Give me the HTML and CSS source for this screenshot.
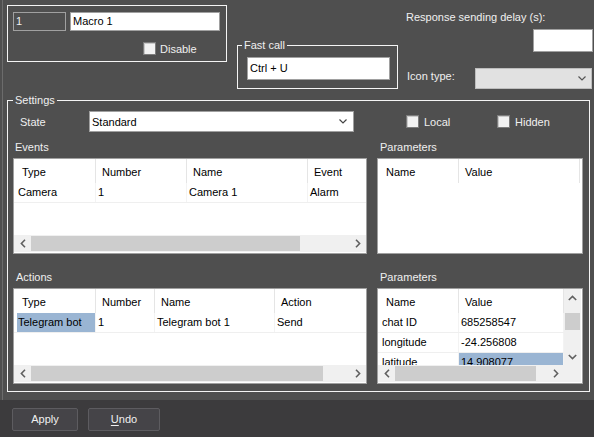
FILE: index.html
```html
<!DOCTYPE html>
<html>
<head>
<meta charset="utf-8">
<title>Macro</title>
<link rel="stylesheet" href="styles.css">
</head>
<body>
<div class="main">
  <div class="top">
    <div class="group1">
      <div class="row-inputs">
        <div class="inp inp-dark id-inp">1</div>
        <div class="inp name-inp">Macro 1</div>
      </div>
      <div class="chk chk-disable"><span class="box"></span><span>Disable</span></div>
    </div>
    <fieldset class="fast">
      <legend>Fast call</legend>
      <div class="inp fast-inp">Ctrl + U</div>
    </fieldset>
    <div class="rightp">
      <div class="rs-label">Response sending delay (s):</div>
      <div class="inp delay"></div>
      <div class="icon-row">
        <span class="icon-label">Icon type:</span>
        <div class="combo combo-dis"><span></span><svg class="chev" width="8" height="5" viewBox="0 0 8 5"><polyline points="0.5,0.5 4,4 7.5,0.5" fill="none" stroke="#555" stroke-width="1.2"/></svg></div>
      </div>
    </div>
  </div>

  <fieldset class="settings">
    <legend>Settings</legend>
    <div class="settings-body">
      <div class="state-row">
        <span class="state-label">State</span>
        <div class="combo combo-state"><span>Standard</span><svg class="chev" width="8" height="5" viewBox="0 0 8 5"><polyline points="0.5,0.5 4,4 7.5,0.5" fill="none" stroke="#444" stroke-width="1.2"/></svg></div>
        <div class="chk chk-local"><span class="box"></span><span>Local</span></div>
        <div class="chk"><span class="box"></span><span>Hidden</span></div>
      </div>

      <div class="pair labels labels-1"><div class="lbl-l">Events</div><div class="lbl-r">Parameters</div></div>
      <div class="pair tables">
        <div class="tbl">
          <div class="thead cols-ev">
            <div class="th">Type</div><div class="th">Number</div><div class="th">Name</div><div class="th">Event</div>
          </div>
          <div class="tbody">
            <div class="tr cols-ev"><div class="td">Camera</div><div class="td">1</div><div class="td">Camera 1</div><div class="td">Alarm</div></div>
          </div>
          <div class="hscroll">
            <span class="arr"><svg width="6" height="9" viewBox="0 0 6 9"><polyline points="5,0.8 1.4,4.5 5,8.2" fill="none" stroke="#606060" stroke-width="1.6"/></svg></span>
            <span class="track"><span class="thumb" style="width:269px"></span></span>
            <span class="arr"><svg width="6" height="9" viewBox="0 0 6 9"><polyline points="1,0.8 4.6,4.5 1,8.2" fill="none" stroke="#606060" stroke-width="1.6"/></svg></span>
          </div>
        </div>
        <div class="tbl">
          <div class="thead cols-p1">
            <div class="th">Name</div><div class="th">Value</div><div class="th"></div>
          </div>
          <div class="tbody"></div>
        </div>
      </div>

      <div class="pair labels labels-2"><div class="lbl-l2">Actions</div><div class="lbl-r">Parameters</div></div>
      <div class="pair tables">
        <div class="tbl">
          <div class="thead cols-ac">
            <div class="th">Type</div><div class="th">Number</div><div class="th">Name</div><div class="th">Action</div>
          </div>
          <div class="tbody">
            <div class="tr cols-ac"><div class="td sel">Telegram bot</div><div class="td">1</div><div class="td">Telegram bot 1</div><div class="td">Send</div></div>
          </div>
          <div class="hscroll">
            <span class="arr"><svg width="6" height="9" viewBox="0 0 6 9"><polyline points="5,0.8 1.4,4.5 5,8.2" fill="none" stroke="#606060" stroke-width="1.6"/></svg></span>
            <span class="track"><span class="thumb" style="width:292px"></span></span>
            <span class="arr"><svg width="6" height="9" viewBox="0 0 6 9"><polyline points="1,0.8 4.6,4.5 1,8.2" fill="none" stroke="#606060" stroke-width="1.6"/></svg></span>
          </div>
        </div>
        <div class="tbl tbl-p2">
          <div class="p2-main">
            <div class="thead cols-p2">
              <div class="th">Name</div><div class="th">Value</div>
            </div>
            <div class="tbody">
              <div class="tr cols-p2"><div class="td">chat ID</div><div class="td">685258547</div></div>
              <div class="tr cols-p2"><div class="td">longitude</div><div class="td">-24.256808</div></div>
              <div class="tr cols-p2"><div class="td">latitude</div><div class="td sel">14.908077</div></div>
            </div>
            <div class="hscroll">
              <span class="arr"><svg width="6" height="9" viewBox="0 0 6 9"><polyline points="5,0.8 1.4,4.5 5,8.2" fill="none" stroke="#606060" stroke-width="1.6"/></svg></span>
              <span class="track"><span class="thumb" style="width:141px"></span></span>
              <span class="arr"><svg width="6" height="9" viewBox="0 0 6 9"><polyline points="1,0.8 4.6,4.5 1,8.2" fill="none" stroke="#606060" stroke-width="1.6"/></svg></span>
            </div>
          </div>
          <div class="vscroll">
            <span class="varr"><svg width="9" height="6" viewBox="0 0 9 6"><polyline points="0.8,5 4.5,1.4 8.2,5" fill="none" stroke="#606060" stroke-width="1.6"/></svg></span>
            <span class="vtrack"><span class="vthumb"></span></span>
            <span class="varr"><svg width="9" height="6" viewBox="0 0 9 6"><polyline points="0.8,1 4.5,4.6 8.2,1" fill="none" stroke="#606060" stroke-width="1.6"/></svg></span>
            <span class="corner"></span>
          </div>
        </div>
      </div>
    </div>
  </fieldset>
</div>
<div class="bottom">
  <button class="btn btn-apply">Apply</button>
  <button class="btn btn-undo"><u>U</u>ndo</button>
</div>
</body>
</html>
```
FILE: styles.css
```css
* { box-sizing: border-box; }
html, body { margin: 0; padding: 0; }
body {
  width: 594px;
  height: 437px;
  overflow: hidden;
  background: #4f4f4f;
  font-family: "Liberation Sans", Arial, sans-serif;
  font-size: 11px;
  line-height: 14px;
  color: #f0f0f0;
}
.main {
  height: 400px;
  margin-left: 2px;
  border-left: 1px solid #6c6c6c;
  padding-left: 4px;
}
.top {
  display: flex;
  align-items: flex-start;
  height: 89px;
}
.group1 {
  margin-top: 5px;
  width: 220px;
  height: 57px;
  border: 1px solid #f4f4f4;
  padding: 6px 0 0 5px;
}
.row-inputs { display: flex; gap: 4px; }
.inp {
  height: 19px;
  border: 1px solid #a0a0a0;
  background: #fff;
  color: #000;
  padding-left: 2px;
  line-height: 17px;
}
.inp-dark { background: #4f4f4f; color: #f0f0f0; }
.id-inp { width: 53px; }
.name-inp { width: 150px; }

.chk { display: flex; align-items: center; gap: 5px; height: 13px; }
.box {
  width: 13px;
  height: 13px;
  border: 1px solid #7c7c7c;
  background: #f2f2f2;
  box-shadow: inset 1px 1px 0 #c9c9c9;
  flex: none;
}
.chk-disable { margin: 11px 0 0 130px; gap: 4px; }

fieldset { margin: 0; padding: 0; min-width: 0; }
legend {
  padding: 0 2px;
  line-height: 13px;
  font-size: 11px;
  color: #f0f0f0;
}
.fast {
  margin: 39px 0 0 10px;
  width: 161px;
  height: 50px;
  border: 1px solid #f4f4f4;
  flex: none;
}
.fast legend { margin-left: 4px; }
.fast-inp {
  width: 143px;
  height: 23px;
  line-height: 21px;
  margin: 5px 0 0 9px;
}
.rightp {
  flex: 1;
  display: flex;
  flex-direction: column;
  padding-top: 10px;
}
.rs-label { margin-left: 8px; height: 14px; white-space: nowrap; }
.delay {
  align-self: flex-end;
  width: 60px;
  height: 23px;
  margin: 5px 1px 0 0;
}
.icon-row {
  display: flex;
  justify-content: space-between;
  align-items: flex-start;
  margin-top: 16px;
}
.icon-label { margin: 1px 0 0 9px; }
.combo {
  height: 21px;
  border: 1px solid #a0a0a0;
  background: #fff;
  color: #000;
  display: flex;
  align-items: center;
  justify-content: space-between;
  padding: 0 6px 0 2px;
  flex: none;
}
.combo-dis {
  width: 117px;
  margin-right: 2px;
  background: #e1e1e1;
  border-color: #bdbdbd;
  padding-right: 5px;
}
.chev { display: block; }

.settings {
  margin-top: 5px;
  width: 583px;
  height: 298px;
  border: 1px solid #f4f4f4;
}
.settings legend { margin-left: 5px; }
.settings-body { padding: 0 6px 0 5px; }
.state-row {
  display: flex;
  align-items: center;
  height: 21px;
  margin-top: 4px;
}
.state-label { width: 76px; padding-left: 7px; flex: none; }
.combo-state { width: 265px; }
.chk-local { margin-left: 52px; width: 91px; }

.pair {
  display: grid;
  grid-template-columns: 354px 206px;
  column-gap: 10px;
}
.labels { height: 14px; }
.labels-1 { margin-top: 8px; }
.labels-2 { margin-top: 16px; }
.lbl-l { padding-left: 2px; }
.lbl-l2 { padding-left: 3px; }
.lbl-r { padding-left: 3px; }
.tables { margin-top: 4px; }

.tbl {
  height: 96px;
  border: 1px solid #a0a0a0;
  background: #fff;
  color: #000;
  display: flex;
  flex-direction: column;
  overflow: hidden;
}
.thead {
  display: grid;
  height: 24px;
  flex: none;
  overflow: hidden;
}
.th {
  padding: 6px 0 0 6px;
  border-right: 1px solid #e5e5e5;
  white-space: nowrap;
  overflow: hidden;
}
.th:first-child { padding-left: 8px; }
.cols-ev { grid-template-columns: 82px 91px 121px 120px; }
.cols-ac { grid-template-columns: 82px 59px 120px 120px; }
.cols-p1 { grid-template-columns: 81px 121px 10px; }
.cols-p2 { grid-template-columns: 81px 105px; }
.tbody { flex: 1; overflow: hidden; }
.tr {
  display: grid;
  height: 20px;
  border-bottom: 1px solid #efefef;
}
.td {
  padding-left: 2px;
  line-height: 19px;
  border-right: 1px solid #f3f3f3;
  white-space: nowrap;
  overflow: hidden;
}
.td:first-child { margin-left: 3px; padding-left: 1px; }
.td.sel { background: #9ab5d3; }

.hscroll {
  height: 17px;
  margin-bottom: 1px;
  display: flex;
  background: #f0f0f0;
  flex: none;
}
.arr {
  width: 17px;
  flex: none;
  display: flex;
  align-items: center;
  justify-content: center;
}
.track { flex: 1; padding: 1px 0; display: flex; }
.thumb { display: block; height: 15px; background: #cdcdcd; }

.tbl-p2 { flex-direction: row; }
.p2-main {
  width: 186px;
  display: flex;
  flex-direction: column;
  flex: none;
}
.p2-main .tbody { height: 52px; flex: none; }
.vscroll {
  width: 17px;
  display: flex;
  flex-direction: column;
  flex: none;
  background: #f0f0f0;
}
.varr {
  height: 17px;
  flex: none;
  display: flex;
  align-items: center;
  justify-content: center;
}
.vtrack { flex: 1; padding: 7px 1px 0 1px; }
.vthumb { display: block; height: 17px; background: #cdcdcd; }
.corner { height: 18px; flex: none; background: #f0f0f0; border-bottom: 1px solid #fff; }

.bottom {
  height: 37px;
  background: #3c3b3d;
  display: flex;
  align-items: flex-start;
  gap: 10px;
  padding: 8px 0 0 12px;
}
.btn {
  height: 23px;
  margin: 0;
  padding: 0;
  border: 1px solid #5d5c60;
  border-radius: 2px;
  background: #454448;
  color: #f0f0f0;
  font-family: "Liberation Sans", Arial, sans-serif;
  font-size: 11px;
  line-height: 21px;
  text-align: center;
}
.btn-apply { width: 66px; }
.btn-undo { width: 72px; }
.btn u { text-underline-offset: 2px; }
```
